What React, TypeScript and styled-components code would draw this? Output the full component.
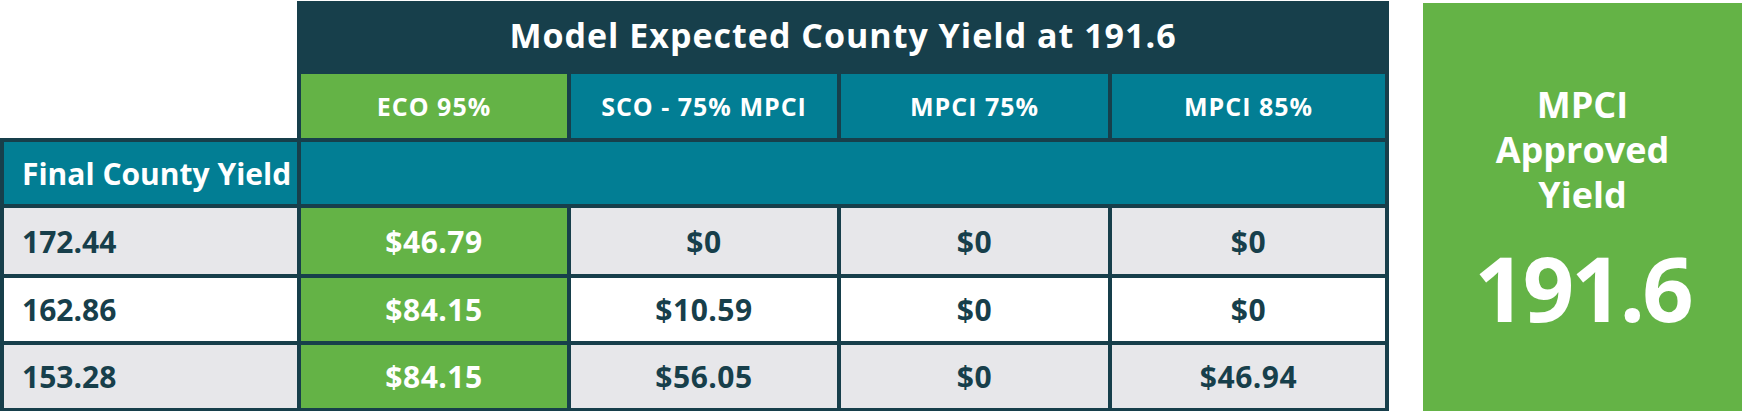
import React from "react";
import styled, { createGlobalStyle } from "styled-components";

const NAVY = "#173f4b";
const TEAL = "#027e94";
const GREEN = "#64b346";
const GREY = "#e7e7ea";

const GlobalStyle = createGlobalStyle`
  html, body {
    margin: 0;
    padding: 0;
    background: #ffffff;
  }
  body {
    font-family: "Open Sans", "Liberation Sans", sans-serif;
    -webkit-font-smoothing: antialiased;
  }
`;

type Tone = "grey" | "white" | "green" | "teal";

const toneBg: Record<Tone, string> = {
  grey: GREY,
  white: "#ffffff",
  green: GREEN,
  teal: TEAL,
};

const columns = [
  { label: "ECO 95%", highlight: true },
  { label: "SCO - 75% MPCI", highlight: false },
  { label: "MPCI 75%", highlight: false },
  { label: "MPCI 85%", highlight: false },
];

const rows = [
  { county: "172.44", values: ["$46.79", "$0", "$0", "$0"], shaded: true },
  { county: "162.86", values: ["$84.15", "$10.59", "$0", "$0"], shaded: false },
  { county: "153.28", values: ["$84.15", "$56.05", "$0", "$46.94"], shaded: true },
];

const App = () => {
  return (
    <>
      <GlobalStyle />
      <S.Page>
        <S.Table>
          <S.HeaderBlock>
            <S.Title>Model Expected County Yield at 191.6</S.Title>
            <S.SubHeader>
              {columns.map((col) => (
                <S.ColumnHead key={col.label} $tone={col.highlight ? "green" : "teal"}>
                  {col.label}
                </S.ColumnHead>
              ))}
            </S.SubHeader>
          </S.HeaderBlock>
          <S.Body>
            <S.LabelCell $tone="teal" $light>
              Final County Yield
            </S.LabelCell>
            <S.SpanCell />
            {rows.map((row) => (
              <React.Fragment key={row.county}>
                <S.LabelCell $tone={row.shaded ? "grey" : "white"}>{row.county}</S.LabelCell>
                {row.values.map((value, i) => {
                  const tone: Tone = columns[i].highlight ? "green" : row.shaded ? "grey" : "white";
                  return (
                    <S.ValueCell key={i} $tone={tone}>
                      {value}
                    </S.ValueCell>
                  );
                })}
              </React.Fragment>
            ))}
          </S.Body>
        </S.Table>
        <S.ApprovedCard>
          <S.CardLabel>
            MPCI
            <br />
            Approved
            <br />
            Yield
          </S.CardLabel>
          <S.CardValue>191.6</S.CardValue>
        </S.ApprovedCard>
      </S.Page>
    </>
  );
};

export default App;

const S = {
  Page: styled.div`
    display: flex;
    align-items: flex-start;
    width: 1744px;
    padding-top: 1px;
  `,
  Table: styled.div`
    width: 1389px;
    display: flex;
    flex-direction: column;
  `,
  HeaderBlock: styled.div`
    margin-left: 297px;
    background: ${NAVY};
    padding: 0 4px;
  `,
  Title: styled.div`
    height: 73px;
    box-sizing: border-box;
    padding-bottom: 5px;
    display: flex;
    align-items: center;
    justify-content: center;
    color: #ffffff;
    font-size: 34px;
    font-weight: 700;
    letter-spacing: 1px;
  `,
  SubHeader: styled.div`
    display: grid;
    grid-template-columns: 266px 266px 267px 273px;
    column-gap: 4px;
    height: 64px;
  `,
  ColumnHead: styled.div<{ $tone: Tone }>`
    display: flex;
    align-items: center;
    justify-content: center;
    background: ${(p) => toneBg[p.$tone]};
    color: #ffffff;
    font-size: 25px;
    font-weight: 700;
    letter-spacing: 1px;
  `,
  Body: styled.div`
    display: grid;
    grid-template-columns: 293px 266px 266px 267px 273px;
    grid-template-rows: 62px 66px 63px 63px;
    gap: 4px;
    padding: 4px 4px 3px 4px;
    background: ${NAVY};
  `,
  LabelCell: styled.div<{ $tone: Tone; $light?: boolean }>`
    display: flex;
    align-items: center;
    padding-left: 18px;
    background: ${(p) => toneBg[p.$tone]};
    color: ${(p) => (p.$light ? "#ffffff" : NAVY)};
    font-size: 30px;
    font-weight: 700;
  `,
  SpanCell: styled.div`
    grid-column: 2 / -1;
    background: ${TEAL};
  `,
  ValueCell: styled.div<{ $tone: Tone }>`
    display: flex;
    align-items: center;
    justify-content: center;
    background: ${(p) => toneBg[p.$tone]};
    color: ${(p) => (p.$tone === "green" ? "#ffffff" : NAVY)};
    font-size: 30px;
    font-weight: 700;
    letter-spacing: 0.5px;
  `,
  ApprovedCard: styled.div`
    margin-left: 34px;
    margin-top: 2px;
    width: 319px;
    height: 408px;
    background: ${GREEN};
    display: flex;
    flex-direction: column;
    align-items: center;
    justify-content: center;
    color: #ffffff;
    font-weight: 700;
    text-align: center;
  `,
  CardLabel: styled.div`
    font-size: 36px;
    line-height: 45px;
  `,
  CardValue: styled.div`
    margin-top: 25px;
    font-size: 90px;
    line-height: 1;
    letter-spacing: -3px;
  `,
};
